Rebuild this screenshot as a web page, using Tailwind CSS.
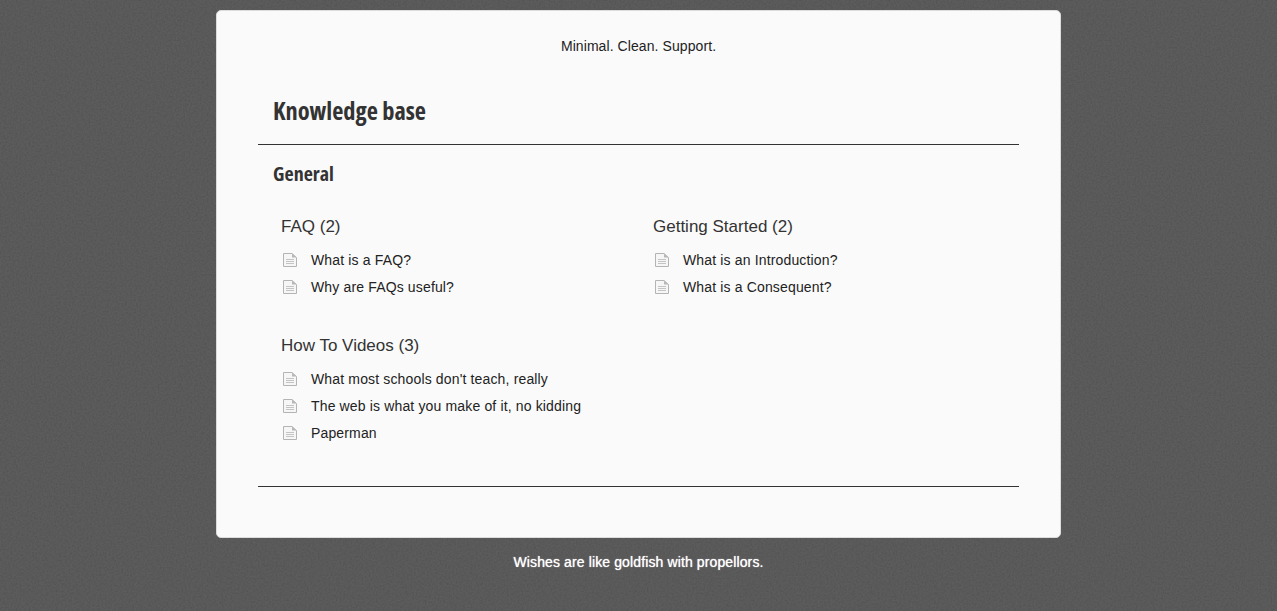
<!DOCTYPE html>
<html lang="en">
<head>
    <meta charset="UTF-8">
    <title>Knowledge base</title>
    <script src="https://cdn.jsdelivr.net/npm/@tailwindcss/browser@4"></script>
</head>
<body class="relative min-h-[611px] overflow-hidden bg-[#5c5c5c] font-['Liberation_Sans',Arial,sans-serif] text-[#222]">

    <!-- background grain -->
    <svg class="absolute inset-0 w-full h-full" xmlns="http://www.w3.org/2000/svg" aria-hidden="true">
        <filter id="grain">
            <feTurbulence type="fractalNoise" baseFrequency="0.55" numOctaves="2" seed="4"/>
            <feColorMatrix type="matrix" values="0 0 0 0 0  0 0 0 0 0  0 0 0 0 0  0.9 0 0 0 -0.32"/>
        </filter>
        <rect width="100%" height="100%" filter="url(#grain)" opacity="0.2"/>
    </svg>

    <svg class="hidden" xmlns="http://www.w3.org/2000/svg">
        <symbol id="doc" viewBox="0 0 14 14">
            <path d="M0.5 0.5H9L13.5 4.5V13.5H0.5Z" fill="#f6f6f6" stroke="#b4b4b4"/>
            <path d="M9 0.5V4.5H13.5Z" fill="#b8b8b8"/>
            <path d="M3 6.5H11M3 8.5H11M3 10.5H11" stroke="#c4c4c4"/>
        </symbol>
    </svg>

    <div class="relative w-[845px] ml-[216px] mt-[10px]">
        <main class="h-[528px] bg-[#fafafa] border border-[#dcdcdc] rounded-[5px] px-[41px]">
            <p class="pt-[27px] text-center text-[14px] leading-[17px] tracking-[0.08px]">Minimal. Clean. Support.</p>

            <header class="mt-[36px] h-[54px] border-b border-[#333] pl-[15px]">
                <h1 class="font-['Open_Sans',sans-serif] font-bold font-stretch-condensed text-[24.4px] leading-[40px] text-[#333]">Knowledge base</h1>
            </header>

            <section class="h-[342px] border-b border-[#333]">
                <h2 class="pl-[15px] pt-[14px] font-['Open_Sans',sans-serif] font-bold font-stretch-condensed text-[20px] leading-[30px] text-[#333]">General</h2>

                <div class="grid grid-cols-[372px_372px] pl-[23px] pt-[22px]">
                    <div class="h-[119px]">
                        <h3 class="h-[30px] text-[17px] leading-[32px] text-[#333]">FAQ (2)</h3>
                        <ul class="mt-[6px] text-[14px] tracking-[0.15px]">
                            <li class="flex items-center h-[27px]"><svg class="w-[14px] h-[14px] ml-[2px] mr-[14px] mb-[2px]"><use href="#doc"/></svg>What is a FAQ?</li>
                            <li class="flex items-center h-[27px]"><svg class="w-[14px] h-[14px] ml-[2px] mr-[14px] mb-[2px]"><use href="#doc"/></svg>Why are FAQs useful?</li>
                        </ul>
                    </div>
                    <div class="h-[119px]">
                        <h3 class="h-[30px] text-[17px] leading-[32px] text-[#333]">Getting Started (2)</h3>
                        <ul class="mt-[6px] text-[14px] tracking-[0.15px]">
                            <li class="flex items-center h-[27px]"><svg class="w-[14px] h-[14px] ml-[2px] mr-[14px] mb-[2px]"><use href="#doc"/></svg>What is an Introduction?</li>
                            <li class="flex items-center h-[27px]"><svg class="w-[14px] h-[14px] ml-[2px] mr-[14px] mb-[2px]"><use href="#doc"/></svg>What is a Consequent?</li>
                        </ul>
                    </div>
                    <div>
                        <h3 class="h-[30px] text-[17px] leading-[32px] text-[#333]">How To Videos (3)</h3>
                        <ul class="mt-[6px] text-[14px] tracking-[0.15px]">
                            <li class="flex items-center h-[27px]"><svg class="w-[14px] h-[14px] ml-[2px] mr-[14px] mb-[2px]"><use href="#doc"/></svg>What most schools don't teach, really</li>
                            <li class="flex items-center h-[27px]"><svg class="w-[14px] h-[14px] ml-[2px] mr-[14px] mb-[2px]"><use href="#doc"/></svg>The web is what you make of it, no kidding</li>
                            <li class="flex items-center h-[27px]"><svg class="w-[14px] h-[14px] ml-[2px] mr-[14px] mb-[2px]"><use href="#doc"/></svg>Paperman</li>
                        </ul>
                    </div>
                </div>
            </section>
        </main>

        <footer class="pt-[16px] text-center text-[14px] leading-[17px] tracking-[0.12px] text-white [text-shadow:0_0_1px_rgba(255,255,255,0.9)]">Wishes are like goldfish with propellors.</footer>
    </div>
</body>
</html>
